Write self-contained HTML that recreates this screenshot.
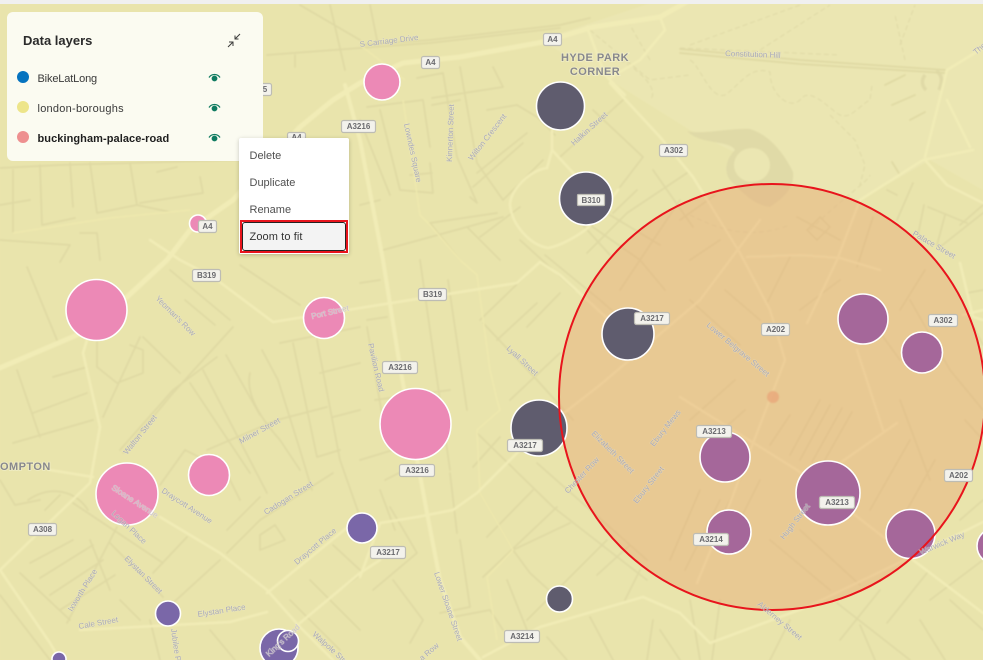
<!DOCTYPE html>
<html lang="en"><head><meta charset="utf-8"><title>Data layers map</title>
<style>
html,body{margin:0;padding:0;background:#e9e4ac}
body{width:983px;height:660px;position:relative;overflow:hidden;font-family:"Liberation Sans",sans-serif}
svg.map{position:absolute;left:0;top:0;width:983px;height:660px}
.s rect{fill:#f3f2ec;stroke:#bdbcb4;stroke-width:1.2}
.s text{font:bold 8px "Liberation Sans",sans-serif;fill:#6a6a6e;text-anchor:middle}
.r text{font:8px "Liberation Sans",sans-serif;fill:#aaaab8;paint-order:stroke;stroke:rgba(240,238,215,.35);stroke-width:1px}
.p text{font:bold 11px "Liberation Sans",sans-serif;fill:#88888c;letter-spacing:.45px;paint-order:stroke;stroke:rgba(245,243,215,.6);stroke-width:1.5px}
#top{position:absolute;left:0;top:0;width:983px;height:4px;background:#f0f0f0}
#panel{position:absolute;left:7px;top:12px;width:256px;height:149px;border-radius:6px;background:#fbfbf1}
#panel .t{position:absolute;left:16px;top:21px;font-size:13px;font-weight:bold;color:#2b2b2b;line-height:16px}
#panel .i{position:absolute;left:30.5px;font-size:11px;line-height:14px;color:#3a3a3a}
#panel .i.b{font-weight:bold;color:#1e1e1e;letter-spacing:.07px}
#panel .d{position:absolute;left:10px;width:12px;height:12px;border-radius:50%}
#panel svg{position:absolute}
#menu{position:absolute;left:239px;top:138px;width:110px;height:116px;background:#fff;border-radius:2px;box-shadow:0 1px 4px rgba(0,0,0,.22)}
#menu .m{position:absolute;left:10.5px;font-size:11px;line-height:14px;color:#505050}
#focus{position:absolute;left:1px;top:82px;width:104px;height:29px;border:2px solid #e8141c}
#focus div{position:absolute;left:0;top:0;width:102px;height:27px;border:1px solid #222;border-radius:3px;background:#f3f3f3}
#focus span{position:absolute;left:7.5px;top:8px;font-size:11px;line-height:14px;color:#333;letter-spacing:.1px}
</style></head><body>
<svg class="map" viewBox="0 0 983 660" xmlns="http://www.w3.org/2000/svg">
<g style="filter:blur(.7px)">
<rect width="983" height="660" fill="#e9e4ac"/>
<path d="M660,0H983V190L930,160L860,200L800,185L690,130L610,80L540,40L660,0Z" fill="#ebe6b2"/>
<path d="M687,131C700,135 730,128 750,129C770,135 785,155 793,172C795,190 780,200 770,207C755,205 745,195 735,185C722,175 725,160 735,150C730,140 700,145 687,131Z" fill="#e0daa7"/>
<ellipse cx="752" cy="165" rx="18" ry="17" fill="#ebe6b2"/>
<path d="M925,75c-4,5 -3,11 1,15M936,71c6,3 7,10 3,19" fill="none" stroke="#e0daa7" stroke-width="3.5"/>
<g fill="none" stroke="#dfd9a6" stroke-width="1" stroke-dasharray="5 3">
<path d="M690,60C700,65 710,100 725,95C740,85 750,65 770,72C770,95 790,110 800,100C810,85 830,110 840,115C850,120 860,105 870,100L872,85"/>
<path d="M830,115L855,140L865,165L860,185M760,50L830,5M690,45L800,5M680,48L840,55M900,45L915,5M905,60L895,15M650,60L630,25M590,30L650,80L690,75M620,60C640,70 660,90 650,100"/>
<path d="M810,230C840,200 870,180 870,175M690,215C720,230 750,240 790,225"/>
</g>
<g fill="none" stroke="#dfd9a3" stroke-width="1.7" stroke-linejoin="round" stroke-linecap="round">
<path d="M680,49L800,60L945,70M680,53L800,64L945,73M360,45L430,40L560,25L590,18M360,48L430,43L560,28"/>
<path d="M267,55L360,48M295,55V67M300,5L360,40M330,5L345,70M370,5L378,45"/>
<path d="M0,168L60,165L240,160M13,170V232M40,165L42,225L75,218M70,163L73,207M90,163L97,213L137,205M130,163L137,205L170,212M157,172L177,167M200,177L203,193L140,203M80,233H97L100,260M0,205L30,200M0,240L70,245L60,262"/>
<path d="M367,107L423,100L430,147M380,110L400,190L433,193L430,163M417,78L443,73L457,157L477,203L470,197M432,98L503,87L493,67M432,105L460,100M460,67L477,163L503,200L543,160M487,110L517,105L537,117L555,135M497,213L430,223M527,133L477,173M523,143L473,187M560,157L623,100M620,187L643,157L593,110M653,170L693,227M687,173L627,213L587,253M637,190L613,213M467,227L500,260M430,223L460,260M383,250L467,227L503,217M480,237L520,207M360,205L380,200M360,120L390,195M410,175L432,173M590,225L640,260L665,290M610,215L660,245"/>
<path d="M27,267L57,340M97,340V367L117,383L143,373L143,350L130,345M143,337L180,373M140,337L103,417M217,357L173,390L120,450M233,327L173,393L123,453M190,383L250,473M203,370L267,493M226,355L260,415M250,373C245,395 262,420 280,440L300,470M262,350L278,380L300,450L312,490M280,343L360,327M293,343L317,457L340,450M317,340L340,460L360,517M320,373L360,363M333,417L360,410M207,450L277,420L327,407M33,413L87,393M13,443L93,420M17,370L40,437M53,377L87,367M240,265L300,305M170,270L230,320M185,300L215,325M160,485L185,450L225,470L240,500M260,497L227,530M333,473L260,520L227,553M187,537L153,573M220,560L173,603M20,573L70,620M110,543L163,597M73,503L163,563M117,527L67,623M30,563L73,540M40,578L93,545M50,595L103,560M60,610L115,575M90,540L110,590M0,595L50,660M120,600L140,620M150,620L160,660M210,630L235,660M290,600L340,650M310,580L360,630M333,545L360,570M340,590L360,575M0,480L15,505L40,500M45,510L60,495M28,500C50,485 75,490 88,510M260,550L285,540L275,525L260,535Z"/>
<path d="M420,260L450,470M448,280L467,410M360,283L380,280M367,320L387,317M367,327L383,420M360,460L393,450M450,473L457,533M483,323L537,380L573,420M480,320L540,262M497,340L537,303M510,400L560,353M527,327L560,293M477,433L553,507L647,580M473,467L500,437M480,493L513,550L530,573L563,603M533,490L487,537M557,507L483,577M570,523L513,550M537,463L647,560M607,540L527,620M507,580L527,630M460,540L470,607L440,613M373,590L417,553L390,507M393,580L423,620L410,643M453,617L490,610L503,630M547,637L567,660M590,617L613,660M653,620L647,660M660,630L680,660M375,400L450,390M385,480L405,470M597,575L630,545M640,570L625,600M380,490L395,530M620,290L680,200M560,200L610,255M545,255L600,300L640,335M520,240L575,290"/>
<path d="M807,230L820,217L830,227L817,240ZM797,217L840,240M790,257L767,303M873,217L857,267M680,220L715,195M690,260L720,240M690,300L740,345M725,290L760,320M840,280L800,310M925,270L900,310M860,305L900,360M910,300L950,370M690,420L735,380M700,450L745,410M790,455L820,400M800,460L830,405M812,462L842,408M822,465L852,412M770,445L790,415M760,480L730,540M745,470L715,530M700,490L670,560M720,500L685,570M770,540L830,590M800,530L860,585M870,510L910,440M890,540L935,460M900,400L930,480"/>
<path d="M837,603L910,660M880,590L840,640M927,573L887,623M960,520L983,500M983,560L930,600M690,600L700,660M720,600L712,660M790,620L770,660M860,625L875,660M950,600L983,630M920,620L945,660M913,183L897,220M928,207L967,223M924,205L918,235M945,215L937,245M983,213L940,247M892,162L900,175M887,190L897,195M960,225L983,205M967,293L983,290M970,320L983,345M950,370L983,410M965,420L983,440M885,85L905,75M892,105L915,95M910,120L925,112"/>
</g>
<g fill="none" stroke="#efe9ae" stroke-width="1.4">
<path d="M403,100L420,215L430,225L460,260L477,275L490,370L497,400L500,410L477,430L480,493L513,550L487,577L497,640M360,45L405,80"/>
<path d="M13,233L110,218L190,210"/>
</g>
<g fill="none" stroke="#f1ecb6" stroke-linejoin="round" stroke-linecap="round">
<path stroke-width="5" d="M-5,370L77,335L127,297L167,260L190,230L233,200L300,127L333,100L360,83L403,63L460,57L543,42L593,27L660,17L690,0"/>
<path stroke-width="4" d="M345,85L360,140L383,260L400,367L427,513L440,580L460,637L480,660"/>
<path stroke-width="2.6" d="M150,240L180,260L213,277L273,322L360,308L517,283L540,262L560,275L620,330L640,345M0,570L90,483L100,427L83,353L87,340M50,470L93,477M0,570L50,643L60,660M160,517L220,553L267,590L300,627L333,660M267,593L360,517M300,623L360,573L380,560M360,577L380,523L417,517L453,510L477,493L517,453L555,420L600,385L700,300L760,220"/>
<path stroke-width="2.6" d="M483,657L540,627L643,597L680,613L710,643L807,607L967,530L983,522M913,560L983,613M680,397L797,470L913,560"/>
<path stroke-width="2.6" d="M80,630L230,622L267,612M860,200L923,160L973,150M947,70L983,48M925,157L947,70M970,147L947,100M925,160L947,185L983,203M960,263L973,317L983,320M963,315L983,310M610,83L660,137L693,177L740,253L770,310L785,360L730,503L697,583M747,257L800,255L840,258L880,270M860,200L837,260L807,323M857,350L883,430M840,463L897,423M552,130L552,150L547,168M552,150L575,175L590,190M587,27L605,75L625,95M587,27L640,20L660,17L665,30L640,60L610,78"/>
<path stroke-width="2.6" d="M547,168C530,170 510,190 510,205C512,225 530,245 548,248C565,245 590,228 590,225L618,190"/>
</g>
<circle cx="772" cy="397" r="213" fill="#e6a570" fill-opacity=".42"/>
<circle cx="773" cy="397" r="6" fill="#e8a87a" fill-opacity=".8"/>
</g>
<g stroke="#fff" stroke-width="1.6">
<g fill="#ec89b6">
<circle cx="382" cy="82" r="18"/><circle cx="96.500" cy="310" r="30.500"/><circle cx="324" cy="318" r="20.500"/><circle cx="415.500" cy="424" r="35.500"/><circle cx="127" cy="494" r="31"/><circle cx="209" cy="475" r="20.500"/><circle cx="198" cy="223.500" r="8.500"/>
</g>
<g fill="#5f5c6e">
<circle cx="560.500" cy="106" r="24"/><circle cx="586" cy="198.500" r="26.500"/><circle cx="628" cy="334" r="26"/><circle cx="539" cy="428" r="28"/><circle cx="559.500" cy="599" r="13"/>
</g>
<g fill="#a5679a">
<circle cx="863" cy="319" r="25"/><circle cx="922" cy="352.500" r="20.500"/><circle cx="725" cy="457" r="25"/><circle cx="828" cy="493" r="32"/><circle cx="729" cy="532" r="22"/><circle cx="910.500" cy="534" r="24.500"/><circle cx="995" cy="546" r="18"/>
</g>
<g fill="#7a67a8">
<circle cx="362" cy="528" r="15"/><circle cx="168" cy="613.500" r="12.500"/><circle cx="59" cy="659" r="7"/><circle cx="279" cy="648" r="19"/><circle cx="288" cy="641" r="10.500"/>
</g>
</g>
<circle cx="772" cy="397" r="213" fill="none" stroke="#e8141c" stroke-width="2"/>
<g style="filter:blur(.3px)">
<g class="r">
<text transform="translate(360,47) rotate(-7)">S Carriage Drive</text>
<text transform="translate(725,56) rotate(2)">Constitution Hill</text>
<text transform="translate(574,146) rotate(-42)">Halkin Street</text>
<text transform="translate(472,161) rotate(-52)">Wilton Crescent</text>
<text transform="translate(452,162) rotate(-88)">Kinnerton Street</text>
<text transform="translate(404,124) rotate(78)">Lowndes Square</text>
<text transform="translate(155,299) rotate(45)">Yeoman's Row</text>
<text transform="translate(312,319) rotate(-13)" style="fill:#c9c2cf">Port Street</text>
<text transform="translate(368,344) rotate(77)">Pavilion Road</text>
<text transform="translate(506,349) rotate(43)">Lyall Street</text>
<text transform="translate(127,455) rotate(-51)">Walton Street</text>
<text transform="translate(241,444) rotate(-29)">Milner Street</text>
<text transform="translate(161,492) rotate(33)">Draycott Avenue</text>
<text transform="translate(111,489) rotate(33)" style="fill:#c9c2cf">Sloane Avenue</text>
<text transform="translate(266,515) rotate(-32)">Cadogan Street</text>
<text transform="translate(297,565) rotate(-40)">Draycott Place</text>
<text transform="translate(124,559) rotate(45)">Elystan Street</text>
<text transform="translate(72,612) rotate(-58)">Ixworth Place</text>
<text transform="translate(79,629) rotate(-10)">Cale Street</text>
<text transform="translate(198,617) rotate(-9)">Elystan Place</text>
<text transform="translate(171,629) rotate(82)">Jubilee Place</text>
<text transform="translate(111,514) rotate(43)">Logan Place</text>
<text transform="translate(269,657) rotate(-43)" style="fill:#c9c2cf">King's Road</text>
<text transform="translate(312,635) rotate(42)">Walpole Street</text>
<text transform="translate(434,573) rotate(71)">Lower Sloane Street</text>
<text transform="translate(422,661) rotate(-40)">a Row</text>
<text transform="translate(591,434) rotate(45)">Elizabeth Street</text>
<text transform="translate(654,447) rotate(-52)">Ebury Mews</text>
<text transform="translate(637,504) rotate(-52)">Ebury Street</text>
<text transform="translate(568,494) rotate(-47)">Chester Row</text>
<text transform="translate(706,326) rotate(40)">Lower Belgrave Street</text>
<text transform="translate(784,540) rotate(-52)">Hugh Street</text>
<text transform="translate(921,555) rotate(-23)">Warwick Way</text>
<text transform="translate(757,605) rotate(40)">Alderney Street</text>
<text transform="translate(912,235) rotate(30)">Palace Street</text>
<text transform="translate(976,55) rotate(-40)">The</text>
</g>
<g class="p">
<text x="595" y="61" text-anchor="middle">HYDE PARK</text>
<text x="595" y="75" text-anchor="middle">CORNER</text>
<text x="0" y="470">OMPTON</text>
</g>
<g class="s">
<rect x="543.500" y="33.500" width="18" height="12" rx="2"/><text x="552.500" y="42">A4</text>
<rect x="421.500" y="56.500" width="18" height="12" rx="2"/><text x="430.500" y="65">A4</text>
<rect x="341.500" y="120.500" width="34" height="12" rx="2"/><text x="358.500" y="129">A3216</text>
<rect x="287.500" y="132.500" width="18" height="12" rx="2"/><text x="296.500" y="140">A4</text>
<rect x="245.500" y="83.500" width="26" height="12" rx="2"/><text x="265" y="92">5</text>
<rect x="198.500" y="220.500" width="18" height="12" rx="2"/><text x="207.500" y="229">A4</text>
<rect x="659.500" y="144.500" width="28" height="12" rx="2"/><text x="673.500" y="153">A302</text>
<rect x="577.500" y="194.500" width="27" height="11" rx="1"/><text x="591" y="203">B310</text>
<rect x="192.500" y="269.500" width="28" height="12" rx="2"/><text x="206.500" y="278">B319</text>
<rect x="418.500" y="288.500" width="28" height="12" rx="2"/><text x="432.500" y="297">B319</text>
<rect x="634.500" y="312.500" width="35" height="12" rx="2"/><text x="652" y="321">A3217</text>
<rect x="761.500" y="323.500" width="28" height="12" rx="2"/><text x="775.500" y="332">A202</text>
<rect x="928.500" y="314.500" width="29" height="12" rx="2"/><text x="943" y="323">A302</text>
<rect x="382.500" y="361.500" width="35" height="12" rx="2"/><text x="400" y="370">A3216</text>
<rect x="399.500" y="464.500" width="35" height="12" rx="2"/><text x="417" y="473">A3216</text>
<rect x="507.500" y="439.500" width="35" height="12" rx="2"/><text x="525" y="448">A3217</text>
<rect x="370.500" y="546.500" width="35" height="12" rx="2"/><text x="388" y="555">A3217</text>
<rect x="28.500" y="523.500" width="28" height="12" rx="2"/><text x="42.500" y="532">A308</text>
<rect x="504.500" y="630.500" width="35" height="12" rx="2"/><text x="522" y="639">A3214</text>
<rect x="696.500" y="425.500" width="35" height="12" rx="2"/><text x="714" y="434">A3213</text>
<rect x="819.500" y="496.500" width="35" height="12" rx="2"/><text x="837" y="505">A3213</text>
<rect x="693.500" y="533.500" width="35" height="12" rx="2"/><text x="711" y="542">A3214</text>
<rect x="944.500" y="469.500" width="28" height="12" rx="2"/><text x="958.500" y="478">A202</text>
</g>
</g>
</svg>
<div id="top"></div>
<div id="panel">
<div class="t">Data layers</div>
<svg style="left:219px;top:20px" width="16" height="18" viewBox="0 0 16 18" fill="none" stroke="#3c3c3c" stroke-width="1">
<path d="M14,2L9,7M9,3.500V7H12.500M2,15L7,10M3,10H7V14"/>
</svg>
<div class="d" style="top:59px;background:#0673bf"></div>
<div class="d" style="top:89px;background:#ede58a"></div>
<div class="d" style="top:119px;background:#ee9090"></div>
<div class="i" style="top:60px;letter-spacing:-.15px">BikeLatLong</div>
<div class="i" style="top:90px;letter-spacing:.25px">london-boroughs</div>
<div class="i b" style="top:120px">buckingham-palace-road</div>
<svg style="left:200.500px;top:60px" width="14" height="12" viewBox="0 0 14 12" fill="none"><path d="M1,5.500C3.500,1.500 9.500,1.500 12,5.500" stroke="#0f7b60" stroke-width="1.300"/><circle cx="6.500" cy="6.500" r="2.900" fill="#0f7b60"/></svg>
<svg style="left:200.500px;top:90px" width="14" height="12" viewBox="0 0 14 12" fill="none"><path d="M1,5.500C3.500,1.500 9.500,1.500 12,5.500" stroke="#0f7b60" stroke-width="1.300"/><circle cx="6.500" cy="6.500" r="2.900" fill="#0f7b60"/></svg>
<svg style="left:200.500px;top:120px" width="14" height="12" viewBox="0 0 14 12" fill="none"><path d="M1,5.500C3.500,1.500 9.500,1.500 12,5.500" stroke="#0f7b60" stroke-width="1.300"/><circle cx="6.500" cy="6.500" r="2.900" fill="#0f7b60"/></svg>
</div>
<div id="menu">
<div class="m" style="top:11px">Delete</div>
<div class="m" style="top:38px">Duplicate</div>
<div class="m" style="top:65px">Rename</div>
<div id="focus"><div></div><span>Zoom to fit</span></div>
</div>
</body></html>
